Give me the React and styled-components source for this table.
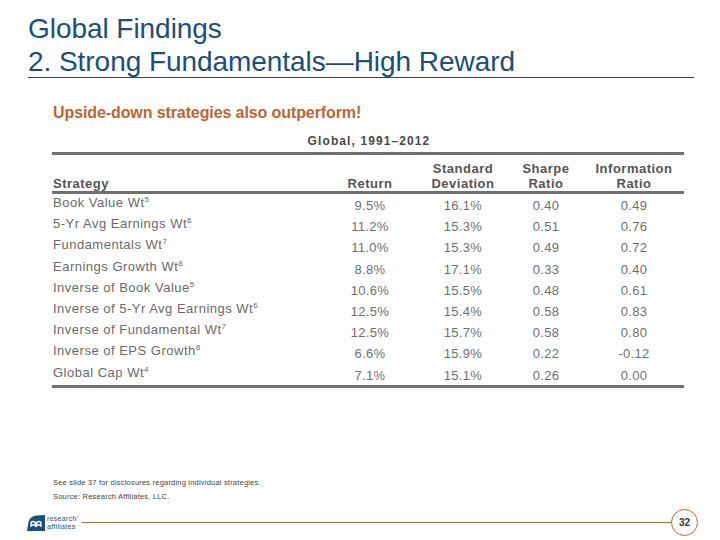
import React from "react";
import styled, { createGlobalStyle } from "styled-components";

const Global = createGlobalStyle`
  html, body { margin: 0; padding: 0; background: #fff; }
  body { font-family: "Liberation Sans", Arial, sans-serif; }
`;

const Slide = styled.div`
  width: 720px;
  height: 540px;
  background: #fff;
  display: flex;
  flex-direction: column;
  overflow: hidden;
`;

const TitleBlock = styled.header`
  margin: 12px 26px 0 28px;
  border-bottom: 1px solid #404040;
`;

const TitleLine = styled.div`
  font-size: 28px;
  line-height: ${(p) => (p.$last ? "31px" : "34px")};
  color: #1b4f79;
  letter-spacing: -0.05px;
`;

const Subtitle = styled.div`
  margin: 26px 0 0 53px;
  font-size: 16px;
  line-height: 18px;
  font-weight: bold;
  color: #c0652d;
  letter-spacing: -0.1px;
`;

const Caption = styled.div`
  margin: 12px 0 0 0;
  text-align: center;
  padding-left: 18px;
  font-size: 12px;
  line-height: 14px;
  font-weight: bold;
  color: #4a4a4a;
  letter-spacing: 1.1px;
`;

const Table = styled.div`
  margin: 4px 0 0 52px;
  width: 632px;
  border-top: 3px solid #707070;
  border-bottom: 3px solid #707070;
  display: grid;
  grid-template-columns: 270px 96px 90px 76px 100px;
`;

const HeadCell = styled.div`
  font-size: 13px;
  font-weight: bold;
  color: #555;
  line-height: 15px;
  padding: 0 0 0 ${(p) => (p.$left ? "1px" : "0")};
  letter-spacing: 0.5px;
  text-align: ${(p) => (p.$left ? "left" : "center")};
  display: flex;
  align-items: flex-end;
  justify-content: ${(p) => (p.$left ? "flex-start" : "center")};
  border-bottom: 3px solid #707070;
  height: 36px;
`;

const Cell = styled.div`
  font-size: 13px;
  color: ${(p) => (p.$left ? "#6a6a6a" : "#707070")};
  height: 21.2px;
  line-height: 21px;
  text-align: ${(p) => (p.$left ? "left" : "center")};
  padding-left: ${(p) => (p.$left ? "1px" : "0")};
  letter-spacing: ${(p) => (p.$left ? "0.5px" : "0.3px")};
  position: relative;
  top: ${(p) => (p.$left ? "-2px" : "1px")};
  white-space: nowrap;
`;

const Sup = styled.sup`
  font-size: 8px;
  line-height: 0;
  vertical-align: 5px;
  letter-spacing: 0;
`;

const Notes = styled.div`
  margin: 88px 0 0 53px;
  font-size: 7.5px;
  color: #444;
  letter-spacing: 0.2px;
  line-height: 14px;
`;

const Footer = styled.div`
  margin: 5px 0 0 27px;
  display: flex;
  align-items: center;
  width: 671px;
`;

const Logo = styled.div`
  display: flex;
  align-items: center;
  gap: 2px;
  margin-top: 2px;
`;

const LogoText = styled.div`
  font-size: 7px;
  line-height: 8px;
  color: #2b4f72;
  letter-spacing: 0.3px;
`;

const Rule = styled.div`
  flex: 1;
  height: 1px;
  background: #b0683a;
  margin: 0 0 0 4px;
`;

const PageNo = styled.div`
  width: 25px;
  height: 25px;
  border: 1px solid #b0683a;
  border-radius: 50%;
  display: flex;
  align-items: center;
  justify-content: center;
  font-size: 10px;
  font-weight: bold;
  color: #333;
`;

const rows = [
  ["Book Value Wt", "5", "9.5%", "16.1%", "0.40", "0.49"],
  ["5-Yr Avg Earnings Wt", "6", "11.2%", "15.3%", "0.51", "0.76"],
  ["Fundamentals Wt", "7", "11.0%", "15.3%", "0.49", "0.72"],
  ["Earnings Growth Wt", "8", "8.8%", "17.1%", "0.33", "0.40"],
  ["Inverse of Book Value", "5", "10.6%", "15.5%", "0.48", "0.61"],
  ["Inverse of 5-Yr Avg Earnings Wt", "6", "12.5%", "15.4%", "0.58", "0.83"],
  ["Inverse of Fundamental Wt", "7", "12.5%", "15.7%", "0.58", "0.80"],
  ["Inverse of EPS Growth", "8", "6.6%", "15.9%", "0.22", "-0.12"],
  ["Global Cap Wt", "4", "7.1%", "15.1%", "0.26", "0.00"],
];

export default function App() {
  return (
    <Slide>
      <Global />
      <TitleBlock>
        <TitleLine>Global Findings</TitleLine>
        <TitleLine $last>2. Strong Fundamentals—High Reward</TitleLine>
      </TitleBlock>
      <Subtitle>Upside-down strategies also outperform!</Subtitle>
      <Caption>Global, 1991–2012</Caption>
      <Table>
        <HeadCell $left>Strategy</HeadCell>
        <HeadCell>Return</HeadCell>
        <HeadCell>Standard<br />Deviation</HeadCell>
        <HeadCell>Sharpe<br />Ratio</HeadCell>
        <HeadCell>Information<br />Ratio</HeadCell>
        {rows.map((r) => (
          <React.Fragment key={r[0]}>
            <Cell $left>
              {r[0]}
              <Sup>{r[1]}</Sup>
            </Cell>
            <Cell>{r[2]}</Cell>
            <Cell>{r[3]}</Cell>
            <Cell>{r[4]}</Cell>
            <Cell>{r[5]}</Cell>
          </React.Fragment>
        ))}
      </Table>
      <Notes>
        <div>See slide 37 for disclosures regarding individual strategies.</div>
        <div>Source: Research Affiliates, LLC.</div>
      </Notes>
      <Footer>
        <Logo>
          <svg width="18" height="16" viewBox="0 0 18 16">
            <path d="M0 16 L1.5 7 Q3 1 10 0.5 L18 0 L18 16 Z" fill="#1b4f79" />
            <path d="M4 12 L4 9 Q4 6.5 6.2 6.5 Q8.4 6.5 8.4 9 L8.4 12 M4 10 L8.4 10 M9.6 12 L9.6 9 Q9.6 6.5 11.8 6.5 Q14 6.5 14 9 L14 12 M9.6 10 L14 10" stroke="#fff" strokeWidth="1.3" fill="none" />
          </svg>
          <LogoText>
            <div>research'</div>
            <div>affiliates</div>
          </LogoText>
        </Logo>
        <Rule />
        <PageNo>32</PageNo>
      </Footer>
    </Slide>
  );
}
